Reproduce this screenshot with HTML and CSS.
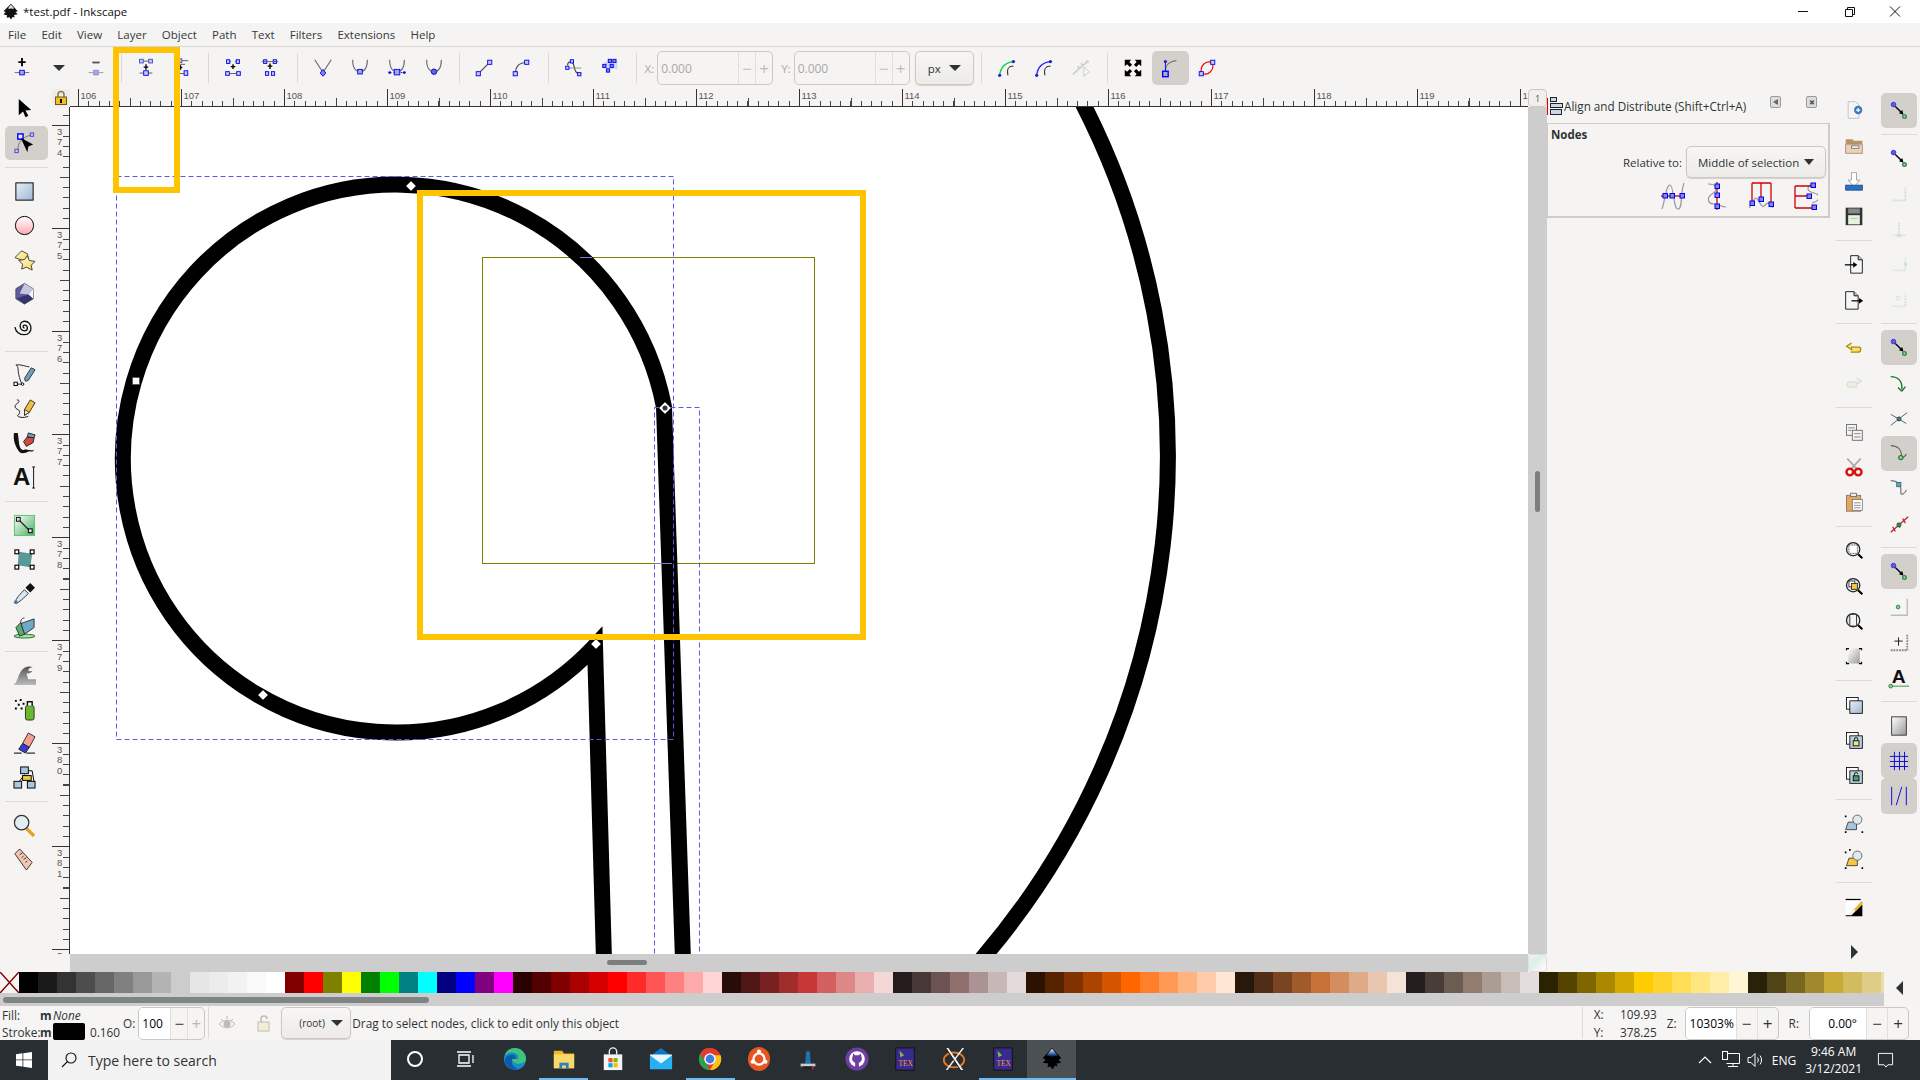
FILE: index.html
```html
<!DOCTYPE html>
<html lang="en">
<head>
    <meta charset="UTF-8">
    <title>*test.pdf - Inkscape</title>
    <link rel="stylesheet" href="styles.css">
</head>
<body>

    <svg class="defs" width="0" height="0">
        <defs>
            <linearGradient id="g-blue" x1="0" y1="0" x2="1" y2="1"><stop offset="0" stop-color="#e8eef5"/><stop offset="1" stop-color="#9db8d2"/></linearGradient>
            <linearGradient id="g-pink" x1="0" y1="0" x2="0" y2="1"><stop offset="0" stop-color="#fff"/><stop offset="1" stop-color="#ffa8b0"/></linearGradient>
            <linearGradient id="g-yellow" x1="0" y1="0" x2="1" y2="1"><stop offset="0" stop-color="#fffbd8"/><stop offset="1" stop-color="#f4d660"/></linearGradient>
            <linearGradient id="g-green" x1="0" y1="0" x2="1" y2="1"><stop offset="0" stop-color="#fff"/><stop offset="1" stop-color="#45b060"/></linearGradient>
            <linearGradient id="g-grey" x1="0" y1="0" x2="1" y2="1"><stop offset="0" stop-color="#fff"/><stop offset="1" stop-color="#999"/></linearGradient>
            <linearGradient id="g-wave" x1="0" y1="0" x2="0" y2="1"><stop offset="0" stop-color="#555"/><stop offset="1" stop-color="#bbb"/></linearGradient>
            <linearGradient id="g-ink" x1="0" y1="0" x2="0" y2="1"><stop offset="0" stop-color="#fff"/><stop offset=".55" stop-color="#3f6fc0"/><stop offset="1" stop-color="#000"/></linearGradient>

            <symbol id="snap" viewBox="0 0 24 24"><circle cx="6" cy="5" r="2.5" fill="#5a5af0" stroke="#3838c8"/><path d="M8 7l7 7" stroke="#000" stroke-width="1.5"/><path d="M17 16l-1.5-5-3.500 3.500z"/><circle cx="18" cy="18" r="2" fill="#9ac89a" stroke="#3a8a4a" stroke-width="1.500"/></symbol>
            <symbol id="snap-corner" viewBox="0 0 24 24"><path d="M5 19h14V5" fill="none" stroke="#cfe0cf" stroke-width="2" stroke-dasharray="2 1"/></symbol>
            <symbol id="zoom-base" viewBox="0 0 24 24"><circle cx="11" cy="11" r="8" fill="#dfe8ec" stroke="#222" stroke-width="1.500"/><path d="M17 17l5 5" stroke="#000" stroke-width="2.500"/></symbol>
        </defs>
    </svg>

    <div class="titlebar">
        <svg class="titlebar__logo" viewBox="0 0 24 24"><path d="M12 1l9 10-3 1 3 3-5 1 1 3-3-.5-2 3.500-2-3-4 .5 1-3-5-1.500 3-3-3-1z" fill="#111"/><path d="M12 2l-4 5 2 1 2-1 2 1 2-1z" fill="#ddd"/></svg>
        <span class="titlebar__text">*test.pdf - Inkscape</span>
        <div class="winctl">
            <svg viewBox="0 0 46 23"><path d="M18 11.500h10" stroke="#111"/></svg>
            <svg viewBox="0 0 46 23"><path d="M19.500 9.500h7v7h-7zM21.500 9.500v-2h7v7h-2" fill="none" stroke="#111"/></svg>
            <svg viewBox="0 0 46 23"><path d="M18 6.500l10 10M28 6.500l-10 10" stroke="#111"/></svg>
        </div>
    </div>

    <div class="menubar">
        <span>File</span><span>Edit</span><span>View</span><span>Layer</span><span>Object</span><span>Path</span><span>Text</span><span>Filters</span><span>Extensions</span><span>Help</span>
    </div>

    <div class="toolbar">
        <div class="tbtn"><svg viewBox="0 0 24 24"><path d="M12 1v9M8 5.500h8" stroke="#000" stroke-width="2"/><path d="M4 17h16" stroke="#666"/><rect x="9.500" y="14.500" width="5" height="5" fill="#aac" stroke="#00f"/></svg></div>
        <div class="tbtn"><i class="caret caret--big"></i></div>
        <div class="tbtn"><svg viewBox="0 0 24 24"><path d="M8 6h8" stroke="#555" stroke-width="2"/><path d="M4 17h16" stroke="#999"/><rect x="9.500" y="14.500" width="5" height="5" fill="#aac" stroke="#88f"/></svg></div>
        <i class="tsep"></i>
        <div class="tbtn"><svg viewBox="0 0 24 24"><g fill="#ccd" stroke="#44d"><rect x="5" y="2.500" width="4" height="4"/><rect x="15" y="2.500" width="4" height="4"/></g><path d="M9 4.500h6M5 17.500h14" stroke="#555"/><path d="M12 8v6M9.500 11h5" stroke="#000" stroke-width="1.500"/><rect x="9.500" y="15" width="5" height="5" fill="#ccd" stroke="#00f"/></svg></div>
        <div class="tbtn tbtn--nudge"><svg viewBox="0 0 24 24"><rect x="4" y="2" width="4.500" height="4" fill="#ccd" stroke="#44d"/><path d="M8.500 4h7M4 8h8" stroke="#555"/><path d="M7 9v5M5 11.500h4" stroke="#000" stroke-width="1.500"/><rect x="11" y="15" width="4" height="5" fill="#ccd" stroke="#00f"/><path d="M6 18h5" stroke="#555"/></svg></div>
        <i class="tsep tsep--tight"></i>
        <div class="tbtn"><svg viewBox="0 0 24 24"><g fill="#ccd" stroke="#00f"><rect x="5" y="3" width="3.500" height="4"/><rect x="15.500" y="3" width="3.500" height="4"/><rect x="4" y="16" width="4" height="4"/><rect x="16" y="16" width="4" height="4"/></g><path d="M8 5h2M14 5h2M8 18h8" stroke="#555"/><path d="M12 8v5M9.500 10.500h5" stroke="#000" stroke-width="1.500"/></svg></div>
        <div class="tbtn"><svg viewBox="0 0 24 24"><g fill="#ccd" stroke="#00f"><rect x="5" y="3" width="3.500" height="4"/><rect x="15.500" y="3" width="3.500" height="4"/><rect x="7" y="16" width="3.500" height="4"/><rect x="13.500" y="16" width="3.500" height="4"/></g><path d="M3 5h18" stroke="#555"/><path d="M12 7v6M9.500 10h5" stroke="#000" stroke-width="1.500"/></svg></div>
        <i class="tsep tsep--wide"></i>
        <div class="tbtn"><svg viewBox="0 0 24 24"><path d="M3 3l9 14 9-14" fill="none" stroke="#666" stroke-width="1.200"/><path d="M12 13.500l3 4-3 3.500-3-3.500z" fill="#88c" stroke="#00f"/></svg></div>
        <div class="tbtn"><svg viewBox="0 0 24 24"><path d="M4 3c0 9 3 13 8 13s8-4 8-13" fill="none" stroke="#666" stroke-width="1.200"/><rect x="9.500" y="13.500" width="5" height="5" fill="#aac" stroke="#00f"/></svg></div>
        <div class="tbtn"><svg viewBox="0 0 24 24"><path d="M4 3c0 9 3 13 8 13s8-4 8-13" fill="none" stroke="#666" stroke-width="1.200"/><path d="M4 17h16" stroke="#00f" stroke-dasharray="2 2"/><rect x="9" y="13.500" width="6" height="6" fill="#aac" stroke="#00f"/><circle cx="4" cy="17" r="1.500" fill="#00f"/><circle cx="20" cy="17" r="1.500" fill="#00f"/></svg></div>
        <div class="tbtn"><svg viewBox="0 0 24 24"><path d="M4 3c0 9 3 13 8 13s8-4 8-13" fill="none" stroke="#666" stroke-width="1.200"/><circle cx="12" cy="16" r="3" fill="#66c" stroke="#00f"/></svg></div>
        <i class="tsep"></i>
        <div class="tbtn"><svg viewBox="0 0 24 24"><path d="M6 18L18 6" stroke="#555" stroke-width="1.200"/><rect x="3.500" y="16" width="4.500" height="4.500" fill="#ccd" stroke="#00f"/><rect x="16" y="3.500" width="4.500" height="4.500" fill="#ccd" stroke="#00f"/></svg></div>
        <div class="tbtn"><svg viewBox="0 0 24 24"><path d="M6 18c0-8 4-12 12-12" fill="none" stroke="#555" stroke-width="1.200"/><rect x="3.500" y="16" width="4.500" height="4.500" fill="#ccd" stroke="#00f"/><rect x="16" y="3.500" width="4.500" height="4.500" fill="#ccd" stroke="#00f"/></svg></div>
        <i class="tsep tsep--wide"></i>
        <div class="tbtn"><svg viewBox="0 0 24 24"><path d="M5 9c0-5 6-5 7 1s3 9 8 8" fill="none" stroke="#444" stroke-width="1.300"/><path d="M6 12h14" stroke="#888"/><g fill="#ccd" stroke="#00f"><rect x="8" y="3" width="3.500" height="3.500"/><rect x="3" y="10" width="3.500" height="3.500"/><rect x="16" y="17" width="3.500" height="3.500"/></g></svg></div>
        <div class="tbtn"><svg viewBox="0 0 24 24"><path d="M5 5h14v8H5z" fill="#b8d0f0" opacity=".7"/><g fill="#88b" stroke="#00f"><rect x="9" y="2.500" width="3.500" height="3.500"/><rect x="14" y="2.500" width="3.500" height="3.500"/><rect x="3" y="8" width="3.500" height="3.500"/><rect x="11" y="8" width="3.500" height="3.500"/><rect x="7" y="13" width="3.500" height="3.500"/></g></svg></div>
        <i class="tsep"></i>
        <span class="flabel flabel--off flabel--x">X:</span>
        <div class="spin spin--off spin--coord"><span class="spin__val">0.000</span><span class="spin__btn">&minus;</span><span class="spin__btn">+</span></div>
        <span class="flabel flabel--off flabel--y">Y:</span>
        <div class="spin spin--off spin--coord"><span class="spin__val">0.000</span><span class="spin__btn">&minus;</span><span class="spin__btn">+</span></div>
        <div class="combo combo--unit"><span>px</span><i class="caret caret--big"></i></div>
        <i class="tsep tsep--unit"></i>
        <div class="tbtn"><svg viewBox="0 0 24 24"><path d="M4 20C5 11 10 6 19 5" fill="none" stroke="#00d040" stroke-width="1.500"/><path d="M19 10c-6 0-7 3-6 10" fill="none" stroke="#000"/><circle cx="4" cy="20" r="1.800" fill="#22c"/><circle cx="19" cy="5" r="1.800" fill="#22c"/></svg></div>
        <div class="tbtn"><svg viewBox="0 0 24 24"><path d="M4 20C5 11 10 6 19 5" fill="none" stroke="#22f" stroke-width="1.500"/><path d="M19 10c-6 0-7 3-6 10" fill="none" stroke="#000"/><circle cx="4" cy="20" r="1.800" fill="#22c"/><circle cx="19" cy="5" r="1.800" fill="#22c"/></svg></div>
        <div class="tbtn"><svg viewBox="0 0 24 24" opacity=".35"><path d="M3 19L19 5M8 10l3 3M12 7l3 3" stroke="#7a9a70" stroke-width="2"/><circle cx="19" cy="5" r="1.800" fill="#99c"/><path d="M15 11l6 5-6 5z" fill="#fff" stroke="#776"/></svg></div>
        <i class="tsep tsep--unit"></i>
        <div class="tbtn"><svg viewBox="0 0 24 24"><path d="M3 3h7L8 5.500l3 3-2.500 2.500-3-3L3 10zM21 3v7l-2.500-2-3 3L13 8.500l3-3L14 3zM3 21v-7l2.500 2 3-3 2.500 2.500-3 3 2 2.500zM21 21h-7l2-2.500-3-3 2.500-2.500 3 3 2.500-2z"/></svg></div>
        <div class="tbtn tbtn--on"><svg viewBox="0 0 24 24"><path d="M7 16c0-8 4-11 12-12" fill="none" stroke="#777" stroke-width="1.300"/><path d="M7 6v9" stroke="#00f"/><circle cx="7" cy="5" r="1.800" fill="#22c"/><rect x="4" y="15.500" width="6" height="6" fill="#aac" stroke="#00f" stroke-width="1.500"/></svg></div>
        <div class="tbtn"><svg viewBox="0 0 24 24"><path d="M6 18C4 10 10 3 18 6M6 18c8 3 14-4 12-12" fill="none" stroke="#f00" stroke-width="1.300"/><rect x="3.500" y="16" width="4.500" height="4.500" fill="#ccd" stroke="#00f"/><rect x="16" y="3.500" width="4.500" height="4.500" fill="#ccd" stroke="#00f"/></svg></div>
    </div>

    <div class="main">
        <div class="toolbox">
            <div class="tool"><svg viewBox="0 0 24 24"><path d="M6 1l0 17 4.500-4 2.500 6 3-1.500-3-5.500 6-.5z"/></svg></div>
            <div class="tool tool--on"><svg viewBox="0 0 24 24"><path d="M5 20C5 11 9 5 20 3" fill="none" stroke="#777"/><rect x="5" y="2" width="5.500" height="5.500" fill="#eef" stroke="#00f" stroke-width="1.500"/><rect x="18" y="1" width="3.500" height="3.500" fill="#ccd" stroke="#44d"/><rect x="2" y="18" width="3.500" height="3.500" fill="#ccd" stroke="#44d"/><path d="M8 6l13 7-5 2-1 6z"/></svg></div>
            <i class="hsep"></i>
            <div class="tool"><svg viewBox="0 0 24 24"><rect x="3" y="3" width="18" height="18" fill="url(#g-blue)" stroke="#000"/></svg></div>
            <div class="tool"><svg viewBox="0 0 24 24"><circle cx="12" cy="12" r="9.500" fill="url(#g-pink)" stroke="#000"/></svg></div>
            <div class="tool"><svg viewBox="0 0 24 24"><path d="M2 10l7-7 6 3 1 5-6 2z" fill="url(#g-yellow)" stroke="#443"/><path d="M15 8l2 5 6 1-4 4 1 5-6-3-5 2 1-5-4-4 6-1z" fill="url(#g-yellow)" stroke="#443"/></svg></div>
            <div class="tool"><svg viewBox="0 0 24 24"><path d="M12 1.500l9 5.500v10.500L12 23l-9-5.500V7z" fill="#5c5ca0" stroke="#555"/><path d="M12 1.500l9 5.500-5 6-9-1z" fill="#c6c6e0"/><path d="M16 13l5-6v10.500z" fill="#f4f4fa"/><path d="M4 17l12-4 5 4.500L12 23z" fill="#35356e"/></svg></div>
            <div class="tool"><svg viewBox="0 0 24 24"><path d="M12 13c-2 0-2-3 0-3 4 0 4 6 0 6-6 0-6-10 0-10 9 0 9 14 0 14-5 0-9-3-10-8" transform="translate(0 -.5)" fill="none" stroke="#111" stroke-width="1.400"/></svg></div>
            <i class="hsep"></i>
            <div class="tool"><svg viewBox="0 0 24 24"><path d="M3 1c3 1 2 6 3 10s2 8 3 9M3 1c5-1 11 2 14 2M3 21h6" fill="none" stroke="#222"/><rect x="1" y="19" width="3.500" height="3.500" fill="#fff" stroke="#000"/><circle cx="10" cy="21" r="1.300" fill="#fff" stroke="#000"/><path d="M13 18l-1-3 7-11 4 2-7 11z" fill="#6fa0c0" stroke="#333"/></svg></div>
            <div class="tool"><svg viewBox="0 0 24 24"><path d="M4 2c3 0 3 2 0 4s-2 5 1 6 2 5 0 6 5 4 11 1" fill="none" stroke="#111"/><path d="M12 18l0-6 6-10 5 3-6 10z" fill="#f2c040" stroke="#333"/><path d="M12 18l0-6 5 3z" fill="#fff0c0" stroke="#333"/></svg></div>
            <div class="tool"><svg viewBox="0 0 24 24"><path d="M1 1c-1 7 1 14 6 20 2 2 6 1 10-1 3 1 4 0 5-1-4 0-7 0-9-1-3 2-5 0-6-3S6 7 5 1z" fill="#111"/><path d="M14 15l-3-5 4-5 7 1-1 5z" fill="#d04a3a" stroke="#222"/><path d="M15 5l7 1 1-3-7-2z" fill="#6fa0c0" stroke="#222"/></svg></div>
            <div class="tool"><svg class="tool__text" viewBox="0 0 24 24"><text x="0" y="20" class="tool__glyph">A</text><path d="M20 1h3M21.500 1v22M20 23h3" stroke="#111" fill="none"/></svg></div>
            <i class="hsep"></i>
            <div class="tool"><svg viewBox="0 0 24 24"><rect x="1.500" y="1.500" width="21" height="21" fill="url(#g-green)" stroke="#60c070"/><path d="M6 6l12 12" stroke="#222" stroke-width="1.200"/><rect x="3.500" y="3.500" width="4" height="4" fill="#ddd" stroke="#000"/><rect x="16" y="15.500" width="4" height="4" fill="#ddd" stroke="#000"/></svg></div>
            <div class="tool"><svg viewBox="0 0 24 24"><path d="M6 4l14 2-2 14-13-2z" fill="#5b9898"/><g fill="#fff" stroke="#000" stroke-width="1.200"><rect x="2" y="2" width="4" height="4"/><rect x="18" y="2" width="4" height="4"/><rect x="2" y="18" width="4" height="4"/><rect x="18" y="18" width="4" height="4"/></g></svg></div>
            <div class="tool"><svg viewBox="0 0 24 24"><path d="M3 22c-1-3 1-6 9-14l4 4c-8 8-11 10-13 10z" fill="#d6e6ee" stroke="#333"/><path d="M13 6l5-5 5 5-5 5z" fill="#111"/><circle cx="3" cy="21" r="2" fill="#4878b0"/></svg></div>
            <div class="tool"><svg viewBox="0 0 24 24"><ellipse cx="12" cy="21" rx="11" ry="2" fill="#a8e0a0" stroke="#2a6a3a"/><path d="M8 8l14-5 0 9-10 7z" fill="#6fa8c8" stroke="#333"/><path d="M3 12l5-5 4 12-5 2z" fill="#55b070" stroke="#333"/><path d="M8 8c0-5 2-6 4-6" fill="none" stroke="#333"/></svg></div>
            <i class="hsep"></i>
            <div class="tool"><svg viewBox="0 0 24 24"><path d="M1 21c3-1 4-8 7-13 3-5 9-7 13-4-3-1-5 1-5 3 1 1 4 0 4 0-1 3-5 3-6 3l2 6h8v6H1z" fill="url(#g-wave)"/></svg></div>
            <div class="tool"><svg viewBox="0 0 24 24"><rect x="13" y="8" width="9" height="15" rx="2" fill="#68b830" stroke="#333"/><path d="M15 8V4h5v4" fill="#fff" stroke="#111" stroke-width="1.500"/><path d="M2 2h2v2H2zM7 1h2v2H7zM5 6h2v2H5zM10 5h2v2h-2zM2 10h2v2H2zM8 10h2v2H8z"/></svg></div>
            <div class="tool"><svg viewBox="0 0 24 24"><path d="M16 1l7 4-6 11-7-4z" fill="#f2a090" stroke="#333"/><path d="M10 12l7 4-4 6-7-4z" fill="#3a3ad0" stroke="#222"/><path d="M1 22h8M14 22h9" stroke="#333" stroke-width="1.200"/></svg></div>
            <div class="tool"><svg viewBox="0 0 24 24"><path d="M12 9l-6 8M14 5h6l2 12" fill="none" stroke="#000"/><rect x="8" y="1" width="8" height="7" fill="#a8c8e0" stroke="#000"/><rect x="10" y="10" width="9" height="5" fill="#f4c840" stroke="#000"/><rect x="1" y="16" width="8" height="7" fill="#a8c8e0" stroke="#000"/><rect x="15" y="16" width="8" height="7" fill="#a8c8e0" stroke="#000"/></svg></div>
            <i class="hsep"></i>
            <div class="tool"><svg viewBox="0 0 24 24"><path d="M14 15l8 8" stroke="#e8a020" stroke-width="3.500"/><circle cx="9" cy="9" r="7.500" fill="#e4eef2" stroke="#333" stroke-width="1.300"/></svg></div>
            <div class="tool"><svg viewBox="0 0 24 24"><path d="M7 1l13 14-6 8L2 6z" fill="#f4c8b0" stroke="#333"/><path d="M7 7l3-2M9 10l2-1.500M11 12l3-2M13 15l2-1.500" stroke="#333"/></svg></div>
        </div>

        <div class="doc">
            <div class="doc__top">
                <div class="lock"><svg viewBox="0 0 16 16"><path d="M5 7V4.500a3 3 0 0 1 6 0V7" fill="none" stroke="#8a7a40" stroke-width="1.500"/><rect x="2.500" y="7" width="11" height="7.500" fill="#f0c020" stroke="#6a5a20"/><rect x="7" y="9" width="2" height="4"/></svg></div>
                <div class="hruler" id="hruler"></div>
                <div class="corner"><span>1</span></div>
            </div>
            <div class="doc__mid">
                <div class="vruler" id="vruler"></div>
                <svg class="canvas" viewBox="70 107 1458 847">
                    <rect x="482.500" y="257.500" width="332" height="306" fill="none" stroke="#808000"/>
                    <path d="M1081 100A773 773 0 0 1 981 960" fill="none" stroke="#000" stroke-width="16"/>
                    <path d="M604 960L595 646A273 274 0 1 1 664 407L683 960" fill="none" stroke="#000" stroke-width="16" stroke-miterlimit="10"/>
                    <path d="M580 257.500h12M655 563.500h17" stroke="#7a7ae0"/>
                    <g fill="none" stroke="#5a5ae6" stroke-dasharray="5 3">
                        <rect x="116.500" y="176.500" width="557" height="563"/>
                        <rect x="654.500" y="407.500" width="45" height="560"/>
                    </g>
                    <rect x="420" y="193" width="443" height="444" fill="none" stroke="#ffc400" stroke-width="6"/>
                    <g fill="#fff" stroke="#444" stroke-width=".6">
                        <path d="M411 181l5 5-5 5-5-5z"/>
                        <path d="M596 639l5 5-5 5-5-5z"/>
                        <path d="M263 690l5 5-5 5-5-5z"/>
                        <rect x="132.500" y="377.500" width="7" height="7"/>
                        <path d="M665 402l6 6-6 6-6-6z"/>
                    </g>
                    <circle cx="665" cy="408" r="2.500" fill="#333"/>
                </svg>
                <div class="vscroll"><i></i></div>
            </div>
            <div class="doc__bottom">
                <div class="doc__blank"></div>
                <div class="hscroll"><i></i></div>
                <div class="corner corner--color"></div>
            </div>
        </div>

        <div class="panel">
            <div class="panel__head">
                <svg class="panel__icon" viewBox="0 0 16 20"><path d="M.5 2v17" stroke="#e00000"/><rect x="3.500" y="1.500" width="6" height="4" fill="#c8d8e8" stroke="#222"/><rect x="3.500" y="7.500" width="12" height="4" fill="#c8d8e8" stroke="#222"/><rect x="3.500" y="13.500" width="11" height="5" fill="#c8d8e8" stroke="#222"/></svg>
                <span class="panel__title">Align and Distribute (Shift+Ctrl+A)</span>
                <span class="panel__btn"><i class="tri-left"></i></span>
                <span class="panel__btn panel__btn--close">&#10006;</span>
            </div>
            <div class="panel__frame">
                <div class="panel__label">Nodes</div>
                <div class="panel__row">
                    <span>Relative to:</span>
                    <div class="combo combo--rel"><span>Middle of selection</span><i class="caret"></i></div>
                </div>
                <div class="panel__icons">
                    <svg viewBox="0 0 26 30"><path d="M2 28c3-8 4-24 8-24s3 24 8 24 2-16 6-26" fill="none" stroke="#999" stroke-width="1.200"/><path d="M1 15h24" stroke="#d00000" stroke-width="1.300"/><g fill="#88c" stroke="#00f"><rect x="3" y="12.500" width="4.500" height="4.500"/><rect x="10" y="12.500" width="4.500" height="4.500"/><rect x="20" y="12.500" width="4.500" height="4.500"/></g></svg>
                    <svg viewBox="0 0 26 30"><path d="M4 3c10 0 10 6 4 10s-4 10 2 10 6 3 12 3" fill="none" stroke="#999" stroke-width="1.200"/><path d="M13 1v28" stroke="#d00000" stroke-width="1.300"/><g fill="#88c" stroke="#00f"><rect x="11" y="3" width="4.500" height="4.500"/><rect x="11" y="12" width="4.500" height="4.500"/><rect x="11" y="23" width="4.500" height="4.500"/></g></svg>
                    <svg viewBox="0 0 26 30"><path d="M1 27c5-5 5-14 9-8s4 8 7 5 4-3 8 3" fill="none" stroke="#999" stroke-width="1.200"/><path d="M4 2v20M13 2v16M23 2v20M4 2h19" fill="none" stroke="#d00000" stroke-width="1.300"/><g fill="#88c" stroke="#00f"><rect x="2" y="20" width="4.500" height="4.500"/><rect x="11" y="16" width="4.500" height="4.500"/><rect x="21" y="21" width="4.500" height="4.500"/></g></svg>
                    <svg viewBox="0 0 26 30"><path d="M22 2c-8 3-8 8 0 10s6 8-2 10" fill="none" stroke="#999" stroke-width="1.200"/><path d="M3 5h18M3 15h14M3 27h18M3 5v22" fill="none" stroke="#d00000" stroke-width="1.300"/><g fill="#88c" stroke="#00f"><rect x="19" y="2" width="4.500" height="4.500"/><rect x="15" y="13" width="4.500" height="4.500"/><rect x="20" y="24" width="4.500" height="4.500"/></g></svg>
                </div>
            </div>
        </div>

        <div class="cmdbar">
            <div class="cbtn"><svg viewBox="0 0 24 24"><path d="M5 2h9l4 4v16H5z" fill="#f4f4f4" stroke="#bbb"/><circle cx="17" cy="12" r="5" fill="#3a7ac0"/><path d="M14.500 12h5M17 9.500v5" stroke="#fff" stroke-width="1.500"/></svg></div>
            <div class="cbtn"><svg viewBox="0 0 24 24"><path d="M2 5h8l2 2h10v15H2z" fill="#b89468"/><path d="M2 11h20v11H2z" fill="#e8d4b4" stroke="#a88"/><path d="M9 13h9v3H9z" fill="#fff" stroke="#666"/></svg></div>
            <div class="cbtn"><svg viewBox="0 0 24 24"><path d="M9 2h6v9h4l-7 8-7-8h4z" fill="#fff" stroke="#999"/><rect x="2" y="17" width="20" height="6" fill="#2a70c0" stroke="#1a4a8a"/></svg></div>
            <div class="cbtn"><svg viewBox="0 0 24 24"><path d="M2 2h20v21H2z" fill="#333"/><rect x="5" y="3" width="14" height="6" fill="#888"/><rect x="5" y="11" width="14" height="11" fill="#e8f0e0"/><path d="M8 15h8" stroke="#9c9"/></svg></div>
            <i class="hsep"></i>
            <div class="cbtn"><svg viewBox="0 0 24 24"><path d="M8 2h9l5 5v16H8z" fill="#f6f6f6" stroke="#000"/><path d="M17 2v5h5" fill="#bbb" stroke="#000"/><path d="M1 13h11" stroke="#000" stroke-width="1.500"/><path d="M16 13l-5-3.500v7z"/></svg></div>
            <div class="cbtn"><svg viewBox="0 0 24 24"><path d="M2 2h10l5 5v16H2z" fill="#f6f6f6" stroke="#000"/><path d="M12 2v5h5" fill="#bbb" stroke="#000"/><path d="M9 13h10" stroke="#000" stroke-width="1.500"/><path d="M23 13l-5-3.500v7z"/></svg></div>
            <i class="hsep"></i>
            <div class="cbtn"><svg viewBox="0 0 24 24"><path d="M9 6L3 10l6 4v-3h9c3 0 3 6-1 6H8" fill="#f8e070" stroke="#a88a10" stroke-width="1.500"/></svg></div>
            <div class="cbtn"><svg viewBox="0 0 24 24" opacity=".35"><path d="M15 6l6 4-6 4v-3H6c-3 0-3 6 1 6h9" fill="#d8f0c8" stroke="#9ac08a" stroke-width="1.500"/></svg></div>
            <i class="hsep"></i>
            <div class="cbtn"><svg viewBox="0 0 24 24"><rect x="3" y="3" width="12" height="13" fill="#f4f4f4" stroke="#777" stroke-width="1.200"/><rect x="10" y="10" width="12" height="12" fill="#f4f4f4" stroke="#777" stroke-width="1.200"/><path d="M5 7h8M5 10h4M12 14h8M12 18h8" stroke="#777"/></svg></div>
            <div class="cbtn"><svg viewBox="0 0 24 24"><path d="M4 2l11 12M20 2L9 14" stroke="#aaa" stroke-width="2"/><circle cx="7" cy="18" r="4" fill="#fff" stroke="#d01818" stroke-width="3"/><circle cx="17" cy="18" r="4" fill="#fff" stroke="#d01818" stroke-width="3"/></svg></div>
            <div class="cbtn"><svg viewBox="0 0 24 24"><rect x="3" y="4" width="17" height="19" fill="#e0a860" stroke="#965"/><rect x="10" y="9" width="12" height="13" fill="#fff" stroke="#777"/><rect x="8" y="1.500" width="7" height="4" fill="#eee" stroke="#666"/><path d="M12 13h8M12 16h8M12 19h8" stroke="#777"/></svg></div>
            <i class="hsep"></i>
            <div class="cbtn"><svg viewBox="0 0 24 24"><use href="#zoom-base"/><rect x="6" y="6" width="10" height="10" fill="#fff" stroke="#222" stroke-dasharray="1 1"/></svg></div>
            <div class="cbtn"><svg viewBox="0 0 24 24"><use href="#zoom-base"/><rect x="6" y="6" width="7" height="7" fill="#fff" stroke="#222"/><rect x="9" y="9" width="7" height="7" fill="#f4c840" stroke="#222"/></svg></div>
            <div class="cbtn"><svg viewBox="0 0 24 24"><use href="#zoom-base"/><rect x="7" y="4" width="8" height="14" fill="#f4f4f4" stroke="#222"/></svg></div>
            <div class="cbtn"><svg viewBox="0 0 24 24"><rect x="5" y="3" width="14" height="18" fill="url(#g-grey)"/><path d="M3 5V3h3M21 5V3h-3M3 19v2h3M21 19v2h-3" fill="none" stroke="#000" stroke-width="1.500"/></svg></div>
            <i class="hsep"></i>
            <div class="cbtn"><svg viewBox="0 0 24 24"><rect x="3" y="3" width="14" height="14" fill="#fff" stroke="#000"/><rect x="7" y="7" width="15" height="15" fill="url(#g-blue)" stroke="#000"/></svg></div>
            <div class="cbtn"><svg viewBox="0 0 24 24"><rect x="3" y="3" width="14" height="14" fill="#fff" stroke="#000"/><rect x="7" y="7" width="15" height="15" fill="#b8d0e0" stroke="#000"/><rect x="11" y="13" width="7" height="6" fill="#f4e080" stroke="#000"/><path d="M12.500 13v-2a2 2 0 0 1 4 0v2" fill="none" stroke="#000"/></svg></div>
            <div class="cbtn"><svg viewBox="0 0 24 24"><rect x="3" y="3" width="14" height="14" fill="#fff" stroke="#000"/><rect x="7" y="7" width="15" height="15" fill="#b8d0e0" stroke="#000"/><rect x="11" y="13" width="7" height="6" fill="#50a050" stroke="#000"/><path d="M12.500 13v-2a2 2 0 0 1 4 0" fill="none" stroke="#000"/></svg></div>
            <i class="hsep"></i>
            <div class="cbtn"><svg viewBox="0 0 24 24"><path d="M2 20l3-9h10v9z" fill="#a8c4dc" stroke="#333"/><circle cx="16" cy="8" r="5.500" fill="#dfe8ec" stroke="#555"/><path d="M1 23h2M21 23h2M1 4h2" stroke="#000" stroke-width="2"/></svg></div>
            <div class="cbtn"><svg viewBox="0 0 24 24"><path d="M3 20l3-9h10v9z" fill="#f4c840" stroke="#333"/><circle cx="16" cy="8" r="5.500" fill="#dfe8ec" stroke="#555"/><path d="M1 23h2M21 23h2M1 4h2M6 1h2" stroke="#000" stroke-width="2"/></svg></div>
            <i class="hsep"></i>
            <div class="cbtn"><svg viewBox="0 0 24 24"><path d="M2 3h18l-6 8-7 8-5 3z" fill="#fff"/><path d="M2 3v20h20V9L9 22H2z"/><path d="M2 3h18" stroke="#000" stroke-width="1.500"/><path d="M12 15l9-10 2 2-9 10z" fill="#f0b020"/></svg></div>
            <div class="cbtn cbtn--more"><i class="tri-right"></i></div>
        </div>

        <div class="snapbar">
            <div class="sbtn sbtn--on"><svg><use href="#snap"/></svg></div>
            <i class="ssep"></i>
            <div class="sbtn"><svg><use href="#snap"/></svg></div>
            <div class="sbtn"><svg><use href="#snap-corner"/></svg></div>
            <div class="sbtn"><svg viewBox="0 0 24 24"><path d="M5 19h14M12 5v14" fill="none" stroke="#d6e4d6" stroke-width="2" stroke-dasharray="2 1"/><circle cx="12" cy="19" r="2" fill="#cfe0cf"/></svg></div>
            <div class="sbtn"><svg viewBox="0 0 24 24"><path d="M5 19h14V5" fill="none" stroke="#d6e4d6" stroke-width="2" stroke-dasharray="2 1"/><circle cx="19" cy="12" r="2" fill="#cfe0cf"/></svg></div>
            <div class="sbtn"><svg viewBox="0 0 24 24"><path d="M5 19h14V5" fill="none" stroke="#d6e4d6" stroke-width="2" stroke-dasharray="2 1"/><circle cx="11" cy="10" r="2" fill="none" stroke="#cfe0cf"/></svg></div>
            <i class="ssep"></i>
            <div class="sbtn sbtn--on"><svg><use href="#snap"/></svg></div>
            <div class="sbtn"><svg viewBox="0 0 24 24"><path d="M3 5c8 0 13 5 12 14" fill="none" stroke="#1a7a2a" stroke-width="1.500"/><path d="M15 21l-4-4M15 21l4-5" stroke="#1a7a2a" stroke-width="1.500"/></svg></div>
            <div class="sbtn"><svg viewBox="0 0 24 24"><path d="M3 20L21 6M3 8l17 10" stroke="#555"/><circle cx="12" cy="13" r="2.200" fill="#3a8a6a" stroke="#246"/></svg></div>
            <div class="sbtn sbtn--on"><svg viewBox="0 0 24 24"><path d="M3 4c9 0 12 6 12 12 0 2 4 0 5-3" fill="none" stroke="#666" stroke-width="1.300"/><circle cx="14" cy="17" r="2.300" fill="#9c9" stroke="#2a7a3a" stroke-width="1.300"/></svg></div>
            <div class="sbtn"><svg viewBox="0 0 24 24"><path d="M3 4c7 0 12 4 11 14 0 2 5 0 6-4" fill="none" stroke="#777" stroke-width="1.300"/><rect x="9.500" y="6" width="4.500" height="4.500" fill="#6a9" stroke="#36a"/></svg></div>
            <div class="sbtn"><svg viewBox="0 0 24 24"><path d="M3 21L22 4" stroke="#c02030" stroke-width="1.400"/><path d="M5 15l3 5M10 11l3 5M16 6l3 5" stroke="#c02030" stroke-width="1.400"/><circle cx="12" cy="13" r="2.200" fill="#3a8a5a" stroke="#163"/></svg></div>
            <i class="ssep"></i>
            <div class="sbtn sbtn--on"><svg><use href="#snap"/></svg></div>
            <div class="sbtn"><svg viewBox="0 0 24 24"><rect x="3" y="3" width="18" height="18" fill="#f6f6f4"/><path d="M21 3v18H3" fill="none" stroke="#bbb" stroke-width="1.500"/><circle cx="11" cy="12" r="2" fill="#9c9" stroke="#2a7a3a"/></svg></div>
            <div class="sbtn"><svg viewBox="0 0 24 24"><path d="M3 21h18V3" fill="none" stroke="#888" stroke-width="2" stroke-dasharray="2 1"/><path d="M7 11h9M11.500 7v9" stroke="#111"/></svg></div>
            <div class="sbtn"><svg class="tool__text" viewBox="0 0 24 24"><text x="4" y="19" class="snap__glyph">A</text><path d="M1 22h22" stroke="#2a8a3a"/><circle cx="3" cy="22" r="2" fill="#9c9" stroke="#2a7a3a"/></svg></div>
            <i class="ssep"></i>
            <div class="sbtn"><svg viewBox="0 0 24 24"><rect x="4" y="2" width="16" height="20" fill="url(#g-grey)" stroke="#333"/></svg></div>
            <div class="sbtn sbtn--on"><svg viewBox="0 0 24 24"><path d="M7 2v20M12.500 2v20M18 2v20M2 7h20M2 12.500h20M2 18h20" stroke="#0000e0"/></svg></div>
            <div class="sbtn sbtn--on"><svg viewBox="0 0 24 24"><path d="M4 2v20M20 2v20M9 22l6-20" stroke="#0000e0"/></svg></div>
        </div>
    </div>

    <div class="palette-row">
        <div class="palette" id="palette">
            <svg class="swatch swatch--none" viewBox="0 0 19 21"><path d="M0 0l19 21M19 0L0 21" stroke="#800000" stroke-width="1.500"/></svg>
        </div>
        <div class="palette-row__end"><i class="tri-left tri-left--dark"></i></div>
    </div>
    <div class="palette-scroll">
        <div class="palette-scroll__track"><i></i></div>
        <div class="palette-scroll__end"></div>
    </div>

    <div class="statusbar">
        <div class="fs">
            <div class="fs__row"><span class="fs__name">Fill:</span><b>m</b><em>None</em></div>
            <div class="fs__row"><span class="fs__name">Stroke:</span><b>m</b><i class="fs__swatch"></i><span class="fs__width">0.160</span></div>
        </div>
        <span class="flabel flabel--o">O:</span>
        <div class="spin spin--white spin--opacity"><span class="spin__val">100</span><span class="spin__btn">&minus;</span><span class="spin__btn spin__btn--off">+</span></div>
        <i class="vline"></i>
        <svg class="st-icon st-icon--eye" viewBox="0 0 20 20" opacity=".35"><path d="M2 11c4-5 12-5 16 0-4 5-12 5-16 0z" fill="#eee" stroke="#555"/><circle cx="10" cy="11" r="3.500" fill="#555"/><path d="M4 6l2 2M10 3v3M16 6l-2 2" stroke="#555"/></svg>
        <svg class="st-icon st-icon--lock" viewBox="0 0 20 20" opacity=".35"><path d="M7 9V6a3 3 0 0 1 6 0" fill="none" stroke="#555" stroke-width="1.500"/><rect x="4" y="9" width="11" height="9" fill="#f0e0a0" stroke="#555"/></svg>
        <div class="combo combo--layer"><span>(root)</span><i class="caret caret--big"></i></div>
        <span class="status-msg">Drag to select nodes, click to edit only this object</span>
        <i class="vline vline--coords"></i>
        <div class="coords">
            <div><span>X:</span><span>109.93</span></div>
            <div><span>Y:</span><span>378.25</span></div>
        </div>
        <span class="flabel flabel--z">Z:</span>
        <div class="spin spin--white spin--zoom"><span class="spin__val">10303%</span><span class="spin__btn">&minus;</span><span class="spin__btn">+</span></div>
        <span class="flabel flabel--r">R:</span>
        <div class="spin spin--white spin--rot"><span class="spin__val">0.00&deg;</span><span class="spin__btn">&minus;</span><span class="spin__btn">+</span></div>
    </div>

    <div class="taskbar">
        <div class="start"><svg viewBox="0 0 16 16"><path d="M0 2.200L6.500 1.300V7.500H0zM7.300 1.200L16 0v7.500H7.300zM0 8.300h6.500v6.300L0 13.700zM7.300 8.300H16V16l-8.700-1.200z" fill="#fff"/></svg></div>
        <div class="search">
            <svg viewBox="0 0 16 16"><circle cx="10" cy="6" r="5" fill="none" stroke="#111" stroke-width="1.100"/><path d="M6.500 9.500L1 15" stroke="#111" stroke-width="1.100"/></svg>
            <span>Type here to search</span>
        </div>
        <div class="tcell"><svg viewBox="0 0 24 24"><circle cx="12" cy="12" r="7" fill="none" stroke="#fff" stroke-width="2"/></svg></div>
        <div class="tcell"><svg viewBox="0 0 24 24"><path d="M5 5h14M5 19h14M7 8h10v8H7zM21 8v8" fill="none" stroke="#fff" stroke-width="1.300"/></svg></div>
        <div class="tcell tcell--edge"><svg viewBox="0 0 26 26"><circle cx="13" cy="13" r="12" fill="#1a8ac8"/><path d="M25 14C25 5 18 1 13 1 7 1 3 5 2 9c3-3 8-4 12-2 3 2 3 5 2 6h-6c0 4 5 6 9 5 3-1 5-2 6-4z" fill="#3cc47c"/><path d="M10 13c-2 5 2 10 7 11-7 2-13-2-15-8-1-4 4-8 8-8 3 0 4 2 4 5z" fill="#0c5aa8"/></svg></div>
        <div class="tcell tcell--run"><svg viewBox="0 0 26 26"><path d="M2 4h9l2 3h11v16H2z" fill="#f4b820"/><rect x="2" y="8" width="22" height="15" fill="#fbd968"/><rect x="8" y="17" width="10" height="6" fill="#2a80c8"/><rect x="11" y="20" width="4" height="3" fill="#fbd968"/></svg></div>
        <div class="tcell"><svg viewBox="0 0 26 26"><path d="M9 8V5a4 4 0 0 1 8 0v3" fill="none" stroke="#eee" stroke-width="1.500"/><rect x="3" y="8" width="20" height="17" fill="#f4f4f4"/><rect x="8" y="12" width="4.500" height="4.500" fill="#f25022"/><rect x="13.500" y="12" width="4.500" height="4.500" fill="#7fba00"/><rect x="8" y="17.500" width="4.500" height="4.500" fill="#00a4ef"/><rect x="13.500" y="17.500" width="4.500" height="4.500" fill="#ffb900"/></svg></div>
        <div class="tcell"><svg viewBox="0 0 26 26"><path d="M1 10L13 1l12 9v14H1z" fill="#0a78c8"/><path d="M1 9h24v15H1z" fill="#28b0f0"/><path d="M1 9l12 9 12-9v-1H1z" fill="#e8f6fe"/></svg></div>
        <div class="tcell tcell--run"><svg viewBox="0 0 26 26"><circle cx="13" cy="13" r="12" fill="#e33b2e"/><path d="M13 13L2.600 7A12 12 0 0 1 24.500 10z" fill="#e33b2e"/><path d="M13 25A12 12 0 0 1 2.600 7L8 16.500z" fill="#2ba24c"/><path d="M13 25A12 12 0 0 0 24.500 9H13l5 7z" fill="#fbc116"/><circle cx="13" cy="13" r="5.500" fill="#3f7ee8" stroke="#fff" stroke-width="1.500"/></svg></div>
        <div class="tcell"><svg viewBox="0 0 26 26"><ellipse cx="13" cy="13" rx="12" ry="13" fill="#e95420"/><circle cx="13" cy="13" r="6" fill="none" stroke="#fff" stroke-width="2.500"/><circle cx="13" cy="5" r="2.200" fill="#fff"/><circle cx="6" cy="16" r="2.200" fill="#fff"/><circle cx="20" cy="16" r="2.200" fill="#fff"/></svg></div>
        <div class="tcell"><svg viewBox="0 0 26 26"><path d="M12 1h2v9h-2z" fill="#333"/><path d="M11 5h4l1 13h-6z" fill="#1f74b8"/><rect x="5" y="18" width="16" height="3" fill="#ccc"/><rect x="8" y="21" width="10" height="3" fill="#222"/><circle cx="18" cy="23" r="1" fill="#d33"/></svg></div>
        <div class="tcell"><svg viewBox="0 0 26 26"><circle cx="13" cy="13" r="12.500" fill="#6e3ea0"/><circle cx="13" cy="13" r="8.500" fill="#fff"/><path d="M9 7l2 2h4l2-2 1 4c1 3-1 6-4 6h-2c-3 0-5-3-4-6zM11 17h4v5h-4z" fill="#6e3ea0"/></svg></div>
        <div class="tcell"><svg viewBox="0 0 26 26"><rect x="3" y="1" width="20" height="24" fill="#3a2a90" stroke="#111"/><path d="M7 4l5 5-4 2z" fill="#7ac040"/><text x="6" y="21" class="tex">TEX</text></svg></div>
        <div class="tcell"><svg viewBox="0 0 26 26"><ellipse cx="13" cy="14" rx="11" ry="8" fill="none" stroke="#e87820" stroke-width="2"/><path d="M4 1l16 24h3L7 1zM22 1L4 25h2L24 1z" fill="#eee"/><path d="M4 1l16 24" stroke="#111"/></svg></div>
        <div class="tcell tcell--run"><svg viewBox="0 0 26 26"><rect x="3" y="1" width="20" height="24" fill="#3a2a90" stroke="#111"/><path d="M7 4l5 5-4 2z" fill="#7ac040"/><text x="6" y="21" class="tex">TEX</text></svg></div>
        <div class="tcell tcell--run tcell--active"><svg viewBox="0 0 26 26"><path d="M13 1l10 11-3 2 3 3-5 1 1 3-3-1-2 4-3-3-3 1 1-4-6-1 3-3-3-2z" fill="#000"/><path d="M13 2l6 7c-2 2-3 0-4 1-1 2-3 1-4 0-1-1-2 0-4-1z" fill="url(#g-ink)"/></svg></div>
        <div class="tray">
            <svg class="tray__chev" viewBox="0 0 14 10"><path d="M1 8l6-6 6 6" fill="none" stroke="#fff" stroke-width="1.200"/></svg>
            <svg class="tray__net" viewBox="0 0 18 18"><path d="M4.500 2.500h13v10h-13M11 12.500v3M6 15.500h10" fill="none" stroke="#fff"/><rect x=".5" y=".5" width="5" height="8" fill="#292e33" stroke="#fff"/></svg>
            <svg class="tray__vol" viewBox="0 0 18 18"><path d="M1 6.500h3l4-4v13l-4-4H1z" fill="none" stroke="#fff"/><path d="M10.500 6.500c1 1.500 1 3.500 0 5M13 4.500c2 2.500 2 6.500 0 9" fill="none" stroke="#fff"/></svg>
            <span class="tray__lang">ENG</span>
            <div class="tray__clock"><span>9:46 AM</span><span>3/12/2021</span></div>
            <svg class="tray__note" viewBox="0 0 18 18"><path d="M1.500 1.500h15v12h-5l-2 2.500-2-2.500h-6z" fill="none" stroke="#fff"/></svg>
        </div>
    </div>

    <div class="highlight"></div>

    <script>
        const hruler = document.getElementById('hruler')
        for (let n = 106; n <= 120; n++) {
            let cell = document.createElement('span')
            cell.className = 'hruler__cell'
            cell.innerHTML = n
            hruler.appendChild(cell)
        }

        const vruler = document.getElementById('vruler')
        for (let n = 374; n <= 382; n++) {
            let cell = document.createElement('span')
            cell.className = 'vruler__cell'
            cell.innerHTML = String(n).split('').join('<br>')
            vruler.appendChild(cell)
        }

        const colors = [
            '#000000','#1a1a1a','#333333','#4d4d4d','#666666','#808080','#999999','#b3b3b3','#cccccc','#e6e6e6','#ececec','#f2f2f2','#f9f9f9','#ffffff',
            '#800000','#ff0000','#808000','#ffff00','#008000','#00ff00','#008080','#00ffff','#000080','#0000ff','#800080','#ff00ff',
            '#2b0000','#550000','#800000','#aa0000','#d40000','#ff0000','#ff2a2a','#ff5555','#ff8080','#ffaaaa','#ffd5d5',
            '#280b0b','#501616','#782121','#a02c2c','#c83737','#d35f5f','#de8787','#e9afaf','#f4d7d7',
            '#241c1c','#483737','#6c5353','#916f6f','#ac9393','#c8b7b7','#e3dbdb',
            '#2b1100','#552200','#803300','#aa4400','#d45500','#ff6600','#ff7f2a','#ff9955','#ffb380','#ffccaa','#ffe6d5',
            '#28170b','#502d16','#784421','#a05a2c','#c87137','#d38d5f','#deaa87','#e9c6af','#f4e3d7',
            '#241f1c','#483e37','#6c5d53','#917c6f','#ac9d93','#c8beb7','#e3dedb',
            '#2b2200','#554400','#806600','#aa8800','#d4aa00','#ffcc00','#ffd42a','#ffdd55','#ffe680','#ffeeaa','#fff6d5',
            '#28220b','#504416','#786721','#a0892c','#c8ab37','#d3bc5f','#decd87','#e9ddaf'
        ]
        const palette = document.getElementById('palette')
        for (let i = 0; i < colors.length; i++) {
            let s = document.createElement('i')
            s.className = 'swatch'
            s.style.background = colors[i]
            palette.appendChild(s)
        }
    </script>
</body>
</html>
```

FILE: styles.css
```css
* {
    box-sizing: border-box;
}

html, body {
    margin: 0;
    height: 100%;
}

body {
    position: relative;
    width: 1920px;
    height: 1080px;
    overflow: hidden;
    background: #f5f4f2;
    color: #2e3436;
    font-family: "Open Sans", "Noto Sans", sans-serif;
    font-size: 11.5px;
}

i {
    display: block;
    font-style: normal;
}

svg {
    display: block;
}

.defs {
    position: absolute;
}

/* title bar */

.titlebar {
    height: 23px;
    background: #fff;
    display: flex;
    align-items: center;
    color: #111;
}

.titlebar__logo {
    width: 18px;
    height: 18px;
    margin: 0 3px 0 2px;
}

.winctl {
    margin-left: auto;
    display: flex;
    margin-right: 2px;
}

.winctl svg {
    width: 46px;
    height: 23px;
}

/* menu */

.menubar {
    height: 24px;
    display: flex;
    align-items: center;
    padding-left: 8px;
    border-bottom: 1px solid #d9d7d3;
    color: #33393b;
}

.menubar span {
    margin-right: 15.200px;
}

/* toolbar */

.toolbar {
    height: 42px;
    display: flex;
    align-items: center;
    padding-left: 3.5px;
}

.tbtn {
    width: 37px;
    height: 34px;
    display: flex;
    align-items: center;
    justify-content: center;
    border-radius: 5px;
}

.tbtn svg {
    width: 22px;
    height: 22px;
}

.tbtn--on {
    background: #d3cfcb;
}

.tbtn--nudge {
    margin-left: 2px;
}

.tsep {
    width: 1px;
    height: 30px;
    margin: 0 6px;
    background: #dcdad6;
}

.tsep--tight {
    margin: 0 6px 0 4px;
}

.tsep--wide {
    margin: 0 7px 0 8px;
}

.tsep--unit {
    margin: 0 7px;
}

.caret {
    width: 0;
    height: 0;
    border-left: 5px solid transparent;
    border-right: 5px solid transparent;
    border-top: 6px solid #2e3436;
}

.caret--big {
    border-left-width: 6px;
    border-right-width: 6px;
}

.flabel--off {
    color: #a9a9a6;
}

.flabel--x {
    margin: 0 3px 0 2px;
}

.flabel--y {
    margin: 0 3px 0 8px;
}

.flabel--o {
    margin: 0 3px;
}

.flabel--z {
    margin: 0 8px 0 10px;
}

.flabel--r {
    margin: 0 10px 0 10px;
}

.spin {
    display: flex;
    height: 34px;
    border: 1px solid #cdc7c2;
    border-radius: 5px;
    overflow: hidden;
    background: #f5f4f2;
}

.spin__val {
    flex: 1;
    display: flex;
    align-items: center;
    padding-left: 3px;
    overflow: hidden;
    white-space: nowrap;
}

.spin__btn {
    width: 17px;
    display: flex;
    align-items: center;
    justify-content: center;
    border-left: 1px solid #e2dfdb;
    font-size: 17px;
    color: #2e3436;
}

.spin--off {
    color: #a9a9a6;
    font-size: 12px;
}

.spin--off .spin__btn {
    color: #bdbdba;
}

.spin--coord {
    width: 116px;
}

.spin--white .spin__val {
    background: #fff;
    color: #000;
    font-size: 12px;
}

.spin__btn--off {
    color: #bbb;
}

.combo {
    display: flex;
    align-items: center;
    justify-content: space-between;
    border: 1px solid #cdc7c2;
    border-radius: 5px;
    background: linear-gradient(#f7f6f4, #edebe8);
    box-shadow: 0 1px 1px #d5d2cd;
}

.combo--unit {
    width: 59px;
    height: 34px;
    margin-left: 5px;
    padding: 0 12px;
}

.combo--rel {
    width: 140px;
    height: 32px;
    margin-left: 4px;
    padding: 0 11px;
}

.combo--layer {
    width: 70px;
    height: 32px;
    margin: 0 1px 0 7px;
    padding: 0 7px 0 17px;
    font-size: 10px;
}

/* main row */

.main {
    height: 883px;
    display: flex;
}

.toolbox {
    width: 52px;
    padding-top: 3px;
    display: flex;
    flex-direction: column;
    align-items: center;
}

.tool {
    width: 43px;
    height: 34px;
    display: flex;
    align-items: center;
    justify-content: center;
    border-radius: 5px;
    flex: none;
}

.tool svg {
    width: 23px;
    height: 23px;
    margin-right: 3px;
}

.tool--on {
    background: #d3cfcb;
}

.tool__text {
    overflow: visible;
}

.tool__glyph {
    font-family: "Liberation Sans", sans-serif;
    font-weight: 700;
    font-size: 25px;
    fill: #111;
}

.hsep {
    width: 43px;
    height: 1px;
    margin: 6.500px 0;
    background: #dcdad6;
    flex: none;
}

.doc {
    width: 1495px;
    display: flex;
    flex-direction: column;
}

.doc__top {
    height: 18px;
    display: flex;
}

.lock {
    width: 18px;
    height: 18px;
    padding: 1px;
    flex: none;
    background: #efedea;
    border-radius: 4px;
}

.hruler {
    width: 1458px;
    display: flex;
    overflow: hidden;
    padding-left: 7.500px;
    border-bottom: 1px solid #333;
    background: repeating-linear-gradient(90deg, #444 0 1px, transparent 1px 10.300px) 7.500px 100% / 100% 5px no-repeat;
}

.hruler__cell {
    flex: none;
    width: 103px;
    padding-left: 2px;
    border-left: 1px solid #333;
    font-family: "Liberation Sans", sans-serif;
    font-size: 9.500px;
    line-height: 13px;
    color: #555;
    background: linear-gradient(#444, #444) 51px 100% / 1px 8px no-repeat;
}

.corner {
    width: 19px;
    display: flex;
    align-items: center;
    justify-content: center;
    background: #f0efec;
    border: 1px solid #cdc7c2;
    border-radius: 4px;
    font-size: 9px;
    color: #555;
}

.corner--color {
    background: linear-gradient(135deg, #f4f4f0, #d8f0e8 40%, #f4f4f0 70%, #fff);
    border-color: #ddd;
}

.doc__mid {
    height: 847px;
    display: flex;
}

.vruler {
    width: 18px;
    flex: none;
    display: flex;
    flex-direction: column;
    overflow: hidden;
    padding-top: 18px;
    border-right: 1px solid #333;
    background: repeating-linear-gradient(180deg, #444 0 1px, transparent 1px 10.300px) 100% 7.500px / 6px 100% no-repeat;
}

.vruler__cell {
    flex: none;
    height: 103px;
    padding: 1px 0 0 5px;
    border-top: 1px solid #333;
    font-family: "Liberation Sans", sans-serif;
    font-size: 9.500px;
    line-height: 10.300px;
    color: #555;
    background: linear-gradient(#444, #444) 100% 51px / 9px 1px no-repeat;
}

.canvas {
    width: 1458px;
    height: 847px;
    background: #fff;
    flex: none;
}

.vscroll {
    width: 19px;
    background: #cdcdcd;
    padding: 364px 7px 0;
}

.vscroll i {
    width: 5px;
    height: 41px;
    border-radius: 3px;
    background: #7d7d7d;
}

.doc__bottom {
    height: 18px;
    display: flex;
}

.doc__blank {
    width: 18px;
    flex: none;
}

.hscroll {
    width: 1458px;
    background: #cdcdcd;
    padding: 6px 0 0 537px;
}

.hscroll i {
    width: 40px;
    height: 5px;
    border-radius: 3px;
    background: #7d7d7d;
}

/* dock panel */

.panel {
    width: 283px;
}

.panel__head {
    height: 34px;
    display: flex;
    align-items: center;
    font-size: 11.700px;
}

.panel__icon {
    width: 16px;
    height: 20px;
    margin-right: 1px;
    flex: none;
}

.panel__title {
    width: 206px;
    flex: none;
    margin-top: -1px;
    color: #2e3436;
}

.panel__btn {
    width: 11px;
    height: 12px;
    margin: -8px 25px 0 0;
    display: flex;
    align-items: center;
    justify-content: center;
    border: 1px solid #999;
    border-radius: 2px;
    background: #ddd;
    font-size: 7px;
    color: #555;
    flex: none;
}

.panel__btn--close {
    margin-right: 0;
}

.tri-left {
    width: 0;
    height: 0;
    border-top: 3px solid transparent;
    border-bottom: 3px solid transparent;
    border-right: 5px solid #666;
}

.tri-left--dark {
    border-top-width: 7px;
    border-bottom-width: 7px;
    border-right-width: 7px;
    border-right-color: #2e3436;
}

.tri-right {
    width: 0;
    height: 0;
    border-top: 7px solid transparent;
    border-bottom: 7px solid transparent;
    border-left: 7px solid #2e3436;
}

.panel__frame {
    height: 95px;
    border: 1px solid #cfcbc5;
    border-width: 1px 2px 2px 1px;
    padding: 3px 3px 0;
}

.panel__label {
    font-weight: 700;
    line-height: 16px;
}

.panel__row {
    display: flex;
    align-items: center;
    justify-content: flex-end;
    margin-right: -1px;
    margin-top: 3px;
}

.panel__icons {
    display: flex;
    margin: 3px 0 0 109px;
}

.panel__icons svg {
    width: 26px;
    height: 30px;
    margin-right: 18px;
    flex: none;
}

.cmdbar {
    width: 48px;
    padding-top: 3.500px;
    display: flex;
    flex-direction: column;
    align-items: center;
}

.cbtn {
    height: 35.300px;
    flex: none;
    display: flex;
    align-items: center;
    justify-content: center;
}

.cbtn svg {
    width: 20px;
    height: 20px;
}

.cmdbar .hsep {
    width: 36px;
    margin: 6px 0;
}

.cbtn--more {
    margin-top: 10px;
}

.snapbar {
    width: 42px;
    padding-top: 4px;
    display: flex;
    flex-direction: column;
    align-items: center;
}

.sbtn {
    width: 36px;
    height: 35.200px;
    flex: none;
    display: flex;
    align-items: center;
    justify-content: center;
    border-radius: 5px;
}

.sbtn svg {
    width: 22px;
    height: 22px;
}

.sbtn--on {
    background: #d3cfcb;
}

.ssep {
    width: 36px;
    height: 1px;
    margin: 6px 0;
    background: #dcdad6;
    flex: none;
}

.snap__glyph {
    font-family: "Liberation Sans", sans-serif;
    font-weight: 700;
    font-size: 21px;
    fill: #111;
}

/* palette */

.palette-row {
    height: 21px;
    display: flex;
}

.palette {
    width: 1884px;
    display: flex;
    overflow: hidden;
}

.swatch {
    width: 19px;
    height: 21px;
    flex: none;
}

.palette-row__end {
    flex: 1;
    padding: 9px 0 0 12px;
}

.palette-scroll {
    height: 13px;
    display: flex;
}

.palette-scroll__track {
    width: 1884px;
    background: #cdcdcd;
    padding: 4px 0 0 3px;
}

.palette-scroll__track i {
    width: 426px;
    height: 6px;
    border-radius: 3px;
    background: #7f8485;
}

/* status bar */

.statusbar {
    height: 34px;
    display: flex;
    align-items: center;
    background: #f6f5f3;
    font-size: 11.800px;
}

.fs {
    width: 120px;
    padding-left: 2px;
}

.fs__row {
    height: 17px;
    display: flex;
    align-items: center;
    white-space: nowrap;
}

.fs__name {
    width: 38px;
    flex: none;
}

.fs__row b {
    width: 13px;
    flex: none;
}

.fs__swatch {
    width: 32px;
    height: 17px;
    background: #000;
    border-radius: 2px;
    flex: none;
}

.fs__width {
    margin-left: 5px;
}

.spin--opacity {
    width: 67px;
    height: 33px;
}

.vline {
    width: 1px;
    height: 32px;
    margin-left: 3px;
    background: #dcdad6;
}

.st-icon {
    width: 20px;
    height: 20px;
}

.st-icon--eye {
    margin-left: 8px;
}

.st-icon--lock {
    margin-left: 17px;
}

.status-msg {
    white-space: nowrap;
}

.statusbar .vline--coords {
    margin-left: auto;
    margin-right: 11px;
}

.coords {
    width: 63px;
}

.coords div {
    display: flex;
    justify-content: space-between;
    line-height: 18px;
}

.spin--zoom {
    width: 94px;
    height: 33px;
}

.spin--rot {
    width: 100px;
    height: 33px;
    margin-right: 11px;
}

.spin--rot .spin__val {
    justify-content: flex-end;
    padding-right: 9px;
}

.spin--zoom .spin__btn,
.spin--rot .spin__btn {
    width: 21px;
}

.spin--zoom .spin__val {
    padding-left: 4px;
}

/* taskbar */

.taskbar {
    height: 40px;
    display: flex;
    background: #292e33;
    color: #fff;
}

.start {
    width: 48px;
    display: flex;
    align-items: center;
    justify-content: center;
}

.start svg {
    width: 16px;
    height: 16px;
}

.search {
    width: 343px;
    display: flex;
    align-items: center;
    padding-left: 13px;
    background: #f2f2f2;
    color: #333;
    font-size: 14px;
}

.search svg {
    width: 16px;
    height: 16px;
    margin-right: 11px;
}

.tcell {
    width: 48.800px;
    flex: none;
    display: flex;
    align-items: center;
    justify-content: center;
    border-bottom: 2px solid transparent;
}

.tcell svg {
    width: 24px;
    height: 24px;
}

.tcell--edge {
    margin-left: 2px;
}

.tcell--run {
    border-bottom-color: #76b9ed;
}

.tcell--active {
    background: #4b5054;
}

.tex {
    font-family: "Liberation Serif", serif;
    font-size: 8px;
    fill: #e8a030;
}

.tray {
    margin-left: auto;
    display: flex;
    align-items: center;
    padding-right: 26px;
    font-size: 12px;
}

.tray__chev {
    width: 14px;
    height: 10px;
    margin-right: 10px;
}

.tray__net,
.tray__vol {
    width: 18px;
    height: 18px;
    margin-right: 7px;
}

.tray__lang {
    margin: 0 9px 0 0;
}

.tray__clock {
    display: flex;
    flex-direction: column;
    align-items: center;
    line-height: 17px;
    margin-right: 15px;
}

.tray__note {
    width: 17px;
    height: 17px;
}

/* annotation drawn on the screenshot */

.highlight {
    position: absolute;
    left: 113px;
    top: 47px;
    width: 67px;
    height: 146px;
    border: 6px solid #ffc400;
}
```
